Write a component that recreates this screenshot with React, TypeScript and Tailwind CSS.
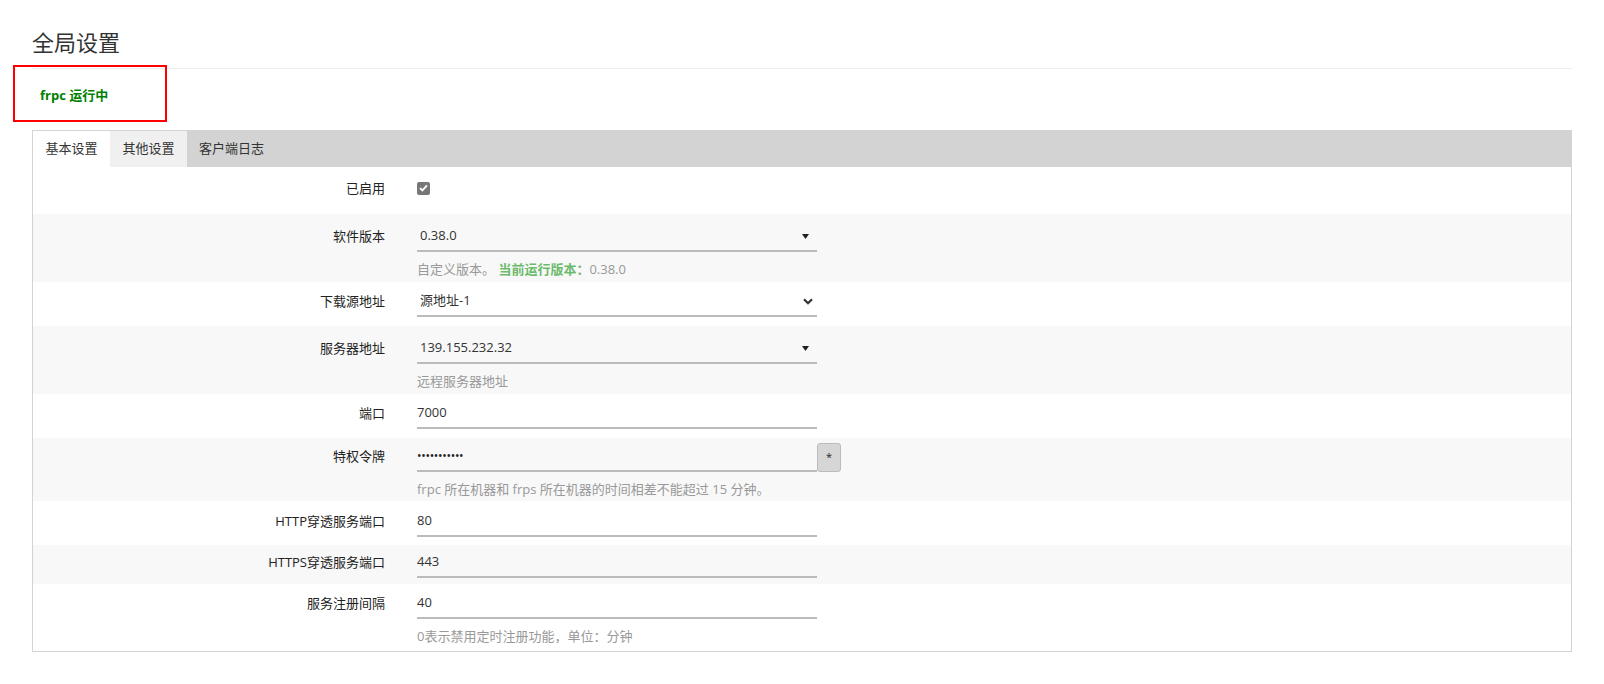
import React from 'react';

const Caret = () => (
  <svg width="7" height="5" viewBox="0 0 7 5" className="shrink-0">
    <path d="M0 0 H7 L3.5 5 Z" fill="#222" />
  </svg>
);

const Chevron = () => (
  <svg width="10" height="7" viewBox="0 0 10 7" className="shrink-0">
    <path d="M1 1.2 L5 5.2 L9 1.2" fill="none" stroke="#333" strokeWidth="2.2" />
  </svg>
);

interface RowProps {
  label: string;
  gray?: boolean;
  box: string;
  children: React.ReactNode;
  desc?: React.ReactNode;
}

const Row: React.FC<RowProps> = ({ label, gray, box, children, desc }) => (
  <div className={`flex ${box} ${gray ? 'bg-[#f8f8f8]' : 'bg-white'}`}>
    <div className="w-[352px] shrink-0 text-right leading-[28px] text-[#222]">{label}</div>
    <div className="ml-[32px] flex flex-col">
      {children}
      {desc && <div className="mt-[8px] leading-[18px] text-[#999]">{desc}</div>}
    </div>
  </div>
);

const Field: React.FC<{ value: string; select?: 'caret' | 'chevron' }> = ({ value, select }) => (
  <div
    className={`flex h-[30px] w-[400px] items-center justify-between border-b-2 border-[#bbb] text-[#333] ${
      select === 'caret' ? 'pl-[3px] pr-[8px]' : select === 'chevron' ? 'pl-[3px] pr-[4px]' : ''
    }`}
  >
    <span>{value}</span>
    {select === 'caret' && <Caret />}
    {select === 'chevron' && <Chevron />}
  </div>
);

const App: React.FC = () => {
  return (
    <div className="relative min-h-[684px] bg-white px-[32px] text-[13px] font-['Open_Sans','Noto_Sans_CJK_SC',sans-serif]">
      <div className="h-[69px] border-b border-[#eee] pt-[27px] text-[22px] leading-[30px] text-[#333]">全局设置</div>

      <div className="absolute left-[13px] top-[65px] h-[57px] w-[154px] border-2 border-[#f00]" />

      <div className="h-[61px] pl-[8px] pt-[17px] font-bold leading-[18px] text-[#008000]">frpc 运行中</div>

      <div className="border border-[#d3d3d3]">
        <div className="flex h-[36px] items-center bg-[#d3d3d3] text-[#333]">
          <div className="flex h-full w-[77px] items-center justify-center bg-white">基本设置</div>
          <div className="flex h-full w-[77px] items-center justify-center bg-[#f0f0f0]">其他设置</div>
          <div className="px-[12px]">客户端日志</div>
        </div>

        <Row label="已启用" box="h-[47px] pt-[7px]">
          <div className="flex h-[28px] items-center">
            <div className="flex h-[13px] w-[13px] items-center justify-center rounded-[2px] bg-[#777]">
              <svg width="9" height="8" viewBox="0 0 9 8">
                <path d="M1 4.2 L3.4 6.4 L8 1.4" fill="none" stroke="#fff" strokeWidth="1.8" />
              </svg>
            </div>
          </div>
        </Row>

        <Row
          label="软件版本"
          gray
          box="h-[68px] pt-[8px]"
          desc={
            <>
              自定义版本。 <span className="font-bold text-[#6cbb6c]">当前运行版本：</span>0.38.0
            </>
          }
        >
          <Field value="0.38.0" select="caret" />
        </Row>

        <Row label="下载源地址" box="h-[44px] pt-[5px]">
          <Field value="源地址-1" select="chevron" />
        </Row>

        <Row label="服务器地址" gray box="h-[68px] pt-[8px]" desc="远程服务器地址">
          <Field value="139.155.232.32" select="caret" />
        </Row>

        <Row label="端口" box="h-[44px] pt-[5px]">
          <Field value="7000" />
        </Row>

        <Row
          label="特权令牌"
          gray
          box="h-[63px] pt-[4px]"
          desc="frpc 所在机器和 frps 所在机器的时间相差不能超过 15 分钟。"
        >
          <div className="flex items-end">
            <div className="flex h-[30px] w-[400px] items-center border-b-2 border-[#bbb] text-[12px] tracking-[-0.3px] text-[#222]">
              •••••••••••
            </div>
            <div className="flex h-[29px] w-[24px] items-center justify-center rounded-[3px] border border-[#bbb] bg-[#d6d6d6] text-[11px] text-[#222]">
              *
            </div>
          </div>
        </Row>

        <Row label="HTTP穿透服务端口" box="h-[44px] pt-[6px]">
          <Field value="80" />
        </Row>

        <Row label="HTTPS穿透服务端口" gray box="h-[39px] pt-[3px]">
          <Field value="443" />
        </Row>

        <Row label="服务注册间隔" box="h-[67px] pt-[5px]" desc="0表示禁用定时注册功能，单位：分钟">
          <Field value="40" />
        </Row>
      </div>
    </div>
  );
};

export default App;
